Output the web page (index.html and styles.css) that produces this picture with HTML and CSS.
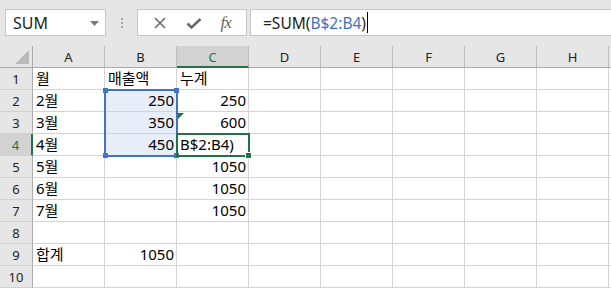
FILE: index.html
```html
<!DOCTYPE html>
<html lang="ko">
<head>
    <meta charset="UTF-8">
    <title>SUM - 누계</title>
    <link rel="stylesheet" href="styles.css">
</head>
<body>

    <div class="topbar">
        <div class="namebox">
            <span>SUM</span>
            <svg class="drop" width="9" height="5" viewBox="0 0 9 5"><path d="M0 0h9L4.5 5z" fill="#7a7a7a"/></svg>
        </div>
        <div class="grip"><i></i><i></i><i></i></div>
        <div class="fxtools">
            <svg width="14" height="14" viewBox="0 0 14 14"><path d="M2 2l10 10M12 2L2 12" stroke="#6b6b6b" stroke-width="1.6" fill="none"/></svg>
            <svg width="16" height="14" viewBox="0 0 16 14"><path d="M1.5 7.5l4 4L14.5 3" stroke="#6b6b6b" stroke-width="2.6" fill="none"/></svg>
            <span class="fx">fx</span>
        </div>
        <div class="formula">
            <span>=SUM(</span><span class="ref">B$2:B4</span><span>)</span><span class="caret"></span>
        </div>
    </div>

    <div class="sheet">
        <div class="corner"></div><div class="ch">A</div><div class="ch">B</div><div class="ch on">C</div><div class="ch">D</div><div class="ch">E</div><div class="ch">F</div><div class="ch">G</div><div class="ch">H</div><div class="ch"></div>

        <div class="rh">1</div><div class="c">월</div><div class="c">매출액</div><div class="c">누계</div><div class="c"></div><div class="c"></div><div class="c"></div><div class="c"></div><div class="c"></div><div class="c"></div>
        <div class="rh">2</div><div class="c">2월</div><div class="c num sel">250</div><div class="c num">250</div><div class="c"></div><div class="c"></div><div class="c"></div><div class="c"></div><div class="c"></div><div class="c"></div>
        <div class="rh">3</div><div class="c">3월</div><div class="c num sel">350</div><div class="c num">600</div><div class="c"></div><div class="c"></div><div class="c"></div><div class="c"></div><div class="c"></div><div class="c"></div>
        <div class="rh on">4</div><div class="c">4월</div><div class="c num sel">450</div><div class="c edit">B$2:B4)</div><div class="c"></div><div class="c"></div><div class="c"></div><div class="c"></div><div class="c"></div><div class="c"></div>
        <div class="rh">5</div><div class="c">5월</div><div class="c"></div><div class="c num">1050</div><div class="c"></div><div class="c"></div><div class="c"></div><div class="c"></div><div class="c"></div><div class="c"></div>
        <div class="rh">6</div><div class="c">6월</div><div class="c"></div><div class="c num">1050</div><div class="c"></div><div class="c"></div><div class="c"></div><div class="c"></div><div class="c"></div><div class="c"></div>
        <div class="rh">7</div><div class="c">7월</div><div class="c"></div><div class="c num">1050</div><div class="c"></div><div class="c"></div><div class="c"></div><div class="c"></div><div class="c"></div><div class="c"></div>
        <div class="rh">8</div><div class="c"></div><div class="c"></div><div class="c"></div><div class="c"></div><div class="c"></div><div class="c"></div><div class="c"></div><div class="c"></div><div class="c"></div>
        <div class="rh">9</div><div class="c">합계</div><div class="c num">1050</div><div class="c"></div><div class="c"></div><div class="c"></div><div class="c"></div><div class="c"></div><div class="c"></div><div class="c"></div>
        <div class="rh">10</div><div class="c"></div><div class="c"></div><div class="c"></div><div class="c"></div><div class="c"></div><div class="c"></div><div class="c"></div><div class="c"></div><div class="c"></div>

        <!-- 참조 범위 (B2:B4) -->
        <div class="range">
            <i class="h tl"></i><i class="h tr"></i><i class="h bl"></i><i class="h br"></i>
        </div>
        <!-- 활성 셀 (C4) -->
        <div class="active"><i class="fill"></i></div>
        <!-- 오류 표시 (C3) -->
        <div class="warn"></div>
    </div>

</body>
</html>
```

FILE: styles.css
```css
/* 기본 */
body {
    margin: 0;
    width: 611px;
    height: 288px;
    overflow: hidden;
    background: #fff;
    font-family: "Noto Sans", "Noto Sans CJK KR", sans-serif;
    color: #000;
}

/* 수식 입력줄 */
.topbar {
    display: flex;
    align-items: flex-start;
    height: 46px;
    padding-top: 9px;
    box-sizing: border-box;
    background-color: #e6e6e6;
}
.namebox {
    display: flex;
    align-items: center;
    justify-content: space-between;
    width: 101px;
    height: 27px;
    margin-left: 5px;
    padding: 0 6px 0 7px;
    box-sizing: border-box;
    background: #fff;
    border: 1px solid #c6c6c6;
    font-size: 16px;
    color: #222;
}
.namebox .drop {
    margin-top: 1px;
}
.grip {
    display: flex;
    flex-direction: column;
    align-items: center;
    gap: 2px;
    width: 31px;
    padding-top: 9px;
}
.grip i {
    width: 2px;
    height: 2px;
    background: #a8a8a8;
}
.fxtools {
    display: flex;
    align-items: center;
    justify-content: space-around;
    width: 110px;
    height: 27px;
    padding: 0 6px;
    box-sizing: border-box;
    background: #fff;
    border: 1px solid #c6c6c6;
}
.fx {
    font-family: "Liberation Serif", serif;
    font-style: italic;
    font-size: 17px;
    color: #666;
    letter-spacing: -1px;
}
.formula {
    flex: 1;
    display: flex;
    align-items: center;
    height: 27px;
    margin-left: 3px;
    padding-left: 12px;
    box-sizing: border-box;
    background: #fff;
    border: 1px solid #c6c6c6;
    border-right: none;
    font-size: 15.5px;
    color: #222;
}
.formula .ref {
    color: #3f6fc2;
}
.caret {
    width: 1px;
    height: 21px;
    margin-left: 1px;
    background: #000;
}

/* 워크시트 */
.sheet {
    position: relative;
    display: grid;
    grid-template-columns: 33px repeat(8, 72px) 30px;
    grid-auto-rows: 22px;
}
.corner,
.ch,
.rh {
    background-color: #e6e6e6;
    font-size: 13px;
    color: #222;
    display: flex;
    align-items: center;
    justify-content: center;
    box-sizing: border-box;
}
.corner {
    position: relative;
    border-right: 1px solid #ababab;
    border-bottom: 1px solid #ababab;
}
.corner::after {
    content: "";
    position: absolute;
    right: 3px;
    bottom: 3px;
    border-left: 14px solid transparent;
    border-bottom: 14px solid #b9b9b9;
}
.ch {
    border-right: 1px solid #bdbdbd;
    border-bottom: 1px solid #ababab;
    padding-top: 1px;
}
.ch.on {
    background-color: #d2d2d2;
    color: #217346;
    border-bottom: 2px solid #217346;
    padding-top: 2px;
}
.rh {
    border-right: 1px solid #ababab;
    border-bottom: 1px solid #d0d0d0;
}
.rh.on {
    background-color: #d2d2d2;
    color: #217346;
    border-right: 2px solid #217346;
}
.c {
    border-right: 1px solid #d4d4d4;
    border-bottom: 1px solid #d4d4d4;
    box-sizing: border-box;
    padding: 0 3px;
    font-size: 15px;
    line-height: 21px;
    white-space: nowrap;
    overflow: hidden;
}
.num {
    text-align: right;
    padding-right: 2px;
}
.sel {
    background-color: #e7eef9;
}
.edit {
    overflow: visible;
}

/* 선택 테두리 */
.range {
    position: absolute;
    left: 104px;
    top: 43px;
    width: 74px;
    height: 68px;
    border: 2px solid #4472c4;
    box-sizing: border-box;
}
.range .h {
    position: absolute;
    width: 5px;
    height: 5px;
    background: #4472c4;
}
.range .tl { left: -3px; top: -3px; }
.range .tr { right: -3px; top: -3px; }
.range .bl { left: -3px; bottom: -3px; }
.range .br { right: -3px; bottom: -3px; }

.active {
    position: absolute;
    left: 176px;
    top: 87px;
    width: 74px;
    height: 24px;
    border: 2px solid #217346;
    box-sizing: border-box;
}
.active .fill {
    position: absolute;
    right: -4px;
    bottom: -4px;
    width: 5px;
    height: 5px;
    background: #217346;
    border: 1px solid #fff;
}
.warn {
    position: absolute;
    left: 178px;
    top: 67px;
    border-top: 6px solid #217346;
    border-right: 6px solid transparent;
}
```
